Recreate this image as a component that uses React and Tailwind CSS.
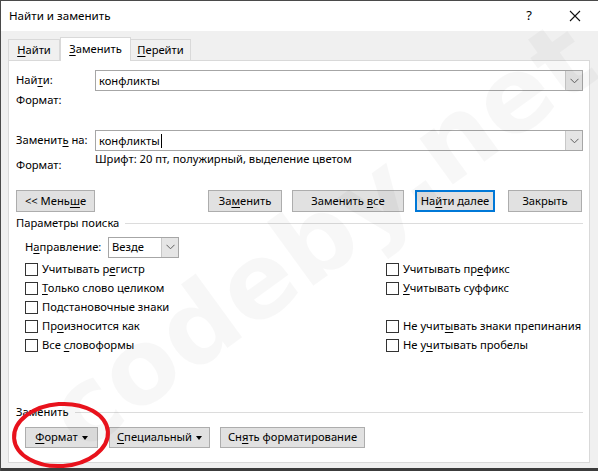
import { useState } from 'react';

const font = { fontFamily: '"Noto Sans", "Liberation Sans", sans-serif' };

// Label with access-key underline on one letter
function Acc({ text, at }) {
    if (at < 0) return <span className="whitespace-pre">{text}</span>;
    return (
        <span className="whitespace-pre">
            {text.slice(0, at)}
            <span className="underline underline-offset-2">{text[at]}</span>
            {text.slice(at + 1)}
        </span>
    );
}

function Chevron() {
    return (
        <svg width="9" height="6" viewBox="0 0 9 6" className="text-[#606060]">
            <path d="M0.5 0.8 L4.5 4.8 L8.5 0.8" fill="none" stroke="currentColor" strokeWidth="1" />
        </svg>
    );
}

function Combo({ value, caret, className = '' }) {
    return (
        <div className={`h-[21px] border border-[#a6a6a6] bg-white flex items-stretch ${className}`}>
            <div className="flex-1 flex items-center pl-[3px] text-[11.2px] leading-none text-black">
                <span>{value}</span>
                {caret && <span className="inline-block w-px h-[14px] bg-black ml-px" />}
            </div>
            <div className="w-[17px] bg-[#e5e5e5] border-l border-[#c8c8c8] flex items-center justify-center">
                <Chevron />
            </div>
        </div>
    );
}

function Btn({ children, className = '', primary = false }) {
    return (
        <div
            className={`flex items-center justify-center bg-[#e1e1e1] text-[11.2px] text-black ${
                primary ? 'border-2 border-[#0078d7]' : 'border border-[#adadad]'
            } ${className}`}
        >
            {children}
        </div>
    );
}

function Check({ label, at }) {
    return (
        <div className="h-[19px] flex items-center">
            <div className="w-[13px] h-[13px] border border-[#333] bg-white shrink-0" />
            <span className="ml-[4px] text-[11.2px] text-black whitespace-nowrap">
                <Acc text={label} at={at} />
            </span>
        </div>
    );
}

function Caret() {
    return <span className="inline-block ml-[4px] w-0 h-0 border-l-[3px] border-r-[3px] border-t-[4px] border-l-transparent border-r-transparent border-t-black" />;
}

export default function App() {
    const [tab] = useState('replace');

    const leftChecks = [
        ['Учитывать регистр', 11],
        ['Только слово целиком', 0],
        ['Подстановочные знаки', -1],
        ['Произносится как', 2],
        ['Все словоформы', 4],
    ];

    return (
        <div style={font} className="relative w-[598px] h-[471px] bg-[#f0f0f0] overflow-hidden border-l border-t border-[#4a4a4a] flex flex-col">
            {/* Title bar */}
            <div className="h-[30px] bg-white flex items-center pl-[8px] shrink-0">
                <span className="text-[11.6px] text-black">Найти и заменить</span>
                <div className="ml-auto flex items-center">
                    <span className="text-[13px] text-black w-[46px] text-center">?</span>
                    <div className="w-[46px] flex justify-center">
                        <svg width="12" height="12" viewBox="0 0 12 12">
                            <path d="M1 1 L11 11 M11 1 L1 11" stroke="#111" strokeWidth="1.1" />
                        </svg>
                    </div>
                </div>
            </div>

            {/* Tabs */}
            <div className="h-[29px] flex items-end pl-[7px] shrink-0 text-[11.2px]">
                <div className="h-[21px] w-[52px] border border-b-0 border-[#d9d9d9] flex items-center justify-center text-black">
                    <Acc text="Найти" at={0} />
                </div>
                <div className={`relative h-[24px] w-[71px] border border-b-0 border-[#d9d9d9] ${tab === 'replace' ? 'bg-white' : ''} -mb-px z-10 flex items-center justify-center text-black`}>
                    <Acc text="Заменить" at={0} />
                </div>
                <div className="h-[21px] w-[60px] border border-b-0 border-l-0 border-[#d9d9d9] flex items-center justify-center text-black">
                    <Acc text="Перейти" at={0} />
                </div>
            </div>

            {/* Panel */}
            <div className="ml-[7px] w-[582px] h-[403px] bg-white border border-[#d9d9d9] pl-[7px] pr-[6px] pt-[9px] flex flex-col text-[11.2px] text-black">
                <div className="flex items-center h-[21px]">
                    <span className="w-[79px] shrink-0">
                        <Acc text="Найти:" at={3} />
                    </span>
                    <Combo value="конфликты" className="flex-1" />
                </div>
                <div className="h-[18px] flex items-center">Формат:</div>

                <div className="flex items-center h-[21px] mt-[21px]">
                    <span className="w-[79px] shrink-0">
                        <Acc text="Заменить на:" at={7} />
                    </span>
                    <Combo value="конфликты" caret className="flex-1" />
                </div>
                <div className="flex h-[22px]">
                    <span className="w-[79px] shrink-0 pt-[6px] leading-[16px]">Формат:</span>
                    <span className="leading-[16px]">Шрифт: 20 пт, полужирный, выделение цветом</span>
                </div>

                {/* Buttons */}
                <div className="flex h-[22px] mt-[17px]">
                    <Btn className="w-[79px]">
                        <Acc text="<< Меньше" at={7} />
                    </Btn>
                    <Btn className="w-[74px] ml-[113px]">
                        <Acc text="Заменить" at={2} />
                    </Btn>
                    <Btn className="w-[112px] ml-[10px]">
                        <Acc text="Заменить все" at={9} />
                    </Btn>
                    <Btn primary className="w-[80px] ml-[11px]">
                        <Acc text="Найти далее" at={2} />
                    </Btn>
                    <Btn className="w-[74px] ml-[13px]">Закрыть</Btn>
                </div>

                {/* Search options */}
                <div className="flex items-center h-[16px] mt-[3px]">
                    <span>Параметры поиска</span>
                    <div className="flex-1 h-px bg-[#dcdcdc] ml-[6px]" />
                </div>

                <div className="pl-[9px] flex flex-col">
                    <div className="flex items-center h-[22px] mt-[5px]">
                        <span className="w-[83px] shrink-0">
                            <Acc text="Направление:" at={1} />
                        </span>
                        <Combo value="Везде" className="w-[71px]" />
                    </div>
                    <div className="flex mt-[2px]">
                        <div className="w-[361px] shrink-0 flex flex-col">
                            {leftChecks.map(([label, at]) => (
                                <Check key={label} label={label} at={at} />
                            ))}
                        </div>
                        <div className="flex flex-col">
                            <Check label="Учитывать префикс" at={12} />
                            <Check label="Учитывать суффикс" at={0} />
                            <div className="h-[19px]" />
                            <Check label="Не учитывать знаки препинания" at={7} />
                            <Check label="Не учитывать пробелы" at={4} />
                        </div>
                    </div>
                </div>

                {/* Replace section */}
                <div className="flex items-center h-[16px] mt-[49px]">
                    <span>Заменить</span>
                    <div className="flex-1 h-px bg-[#dcdcdc] ml-[6px]" />
                </div>
                <div className="flex h-[21px] mt-[7px] pl-[9px]">
                    <Btn className="w-[73px]">
                        <Acc text="Формат" at={0} />
                        <Caret />
                    </Btn>
                    <Btn className="w-[101px] ml-[11px]">
                        <Acc text="Специальный" at={0} />
                        <Caret />
                    </Btn>
                    <Btn className="w-[145px] ml-[10px]">
                        <Acc text="Снять форматирование" at={2} />
                    </Btn>
                </div>
            </div>

            <div className="mt-auto h-[3px] bg-[#3c3c3c]" />

            {/* Watermark */}
            <div className="pointer-events-none absolute left-[0px] top-[190px] w-[620px] text-center -rotate-[36deg] text-[104px] font-bold leading-none text-black/[0.03]" style={{ fontFamily: '"DejaVu Sans", sans-serif' }}>
                codeby.net
            </div>

            {/* Red annotation ellipse */}
            <svg className="pointer-events-none absolute left-0 top-0" width="598" height="471">
                <ellipse cx="60" cy="434" rx="47" ry="31" fill="none" stroke="#e8121c" strokeWidth="4" transform="rotate(-4 60 434)" />
            </svg>
        </div>
    );
}
